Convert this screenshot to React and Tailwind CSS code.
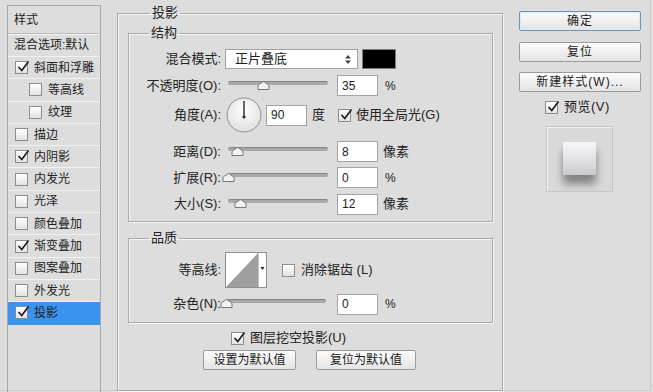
import React from 'react';

const styles = [
  { name: '斜面和浮雕', on: true },
  { name: '等高线', sub: true },
  { name: '纹理', sub: true },
  { name: '描边' },
  { name: '内阴影', on: true },
  { name: '内发光' },
  { name: '光泽' },
  { name: '颜色叠加' },
  { name: '渐变叠加', on: true },
  { name: '图案叠加' },
  { name: '外发光' },
  { name: '投影', on: true, active: true },
];

function Check({ checked }) {
  return (
    <span className="relative flex h-[13px] w-[13px] shrink-0 items-center justify-center border border-[#8d8d8d] bg-gradient-to-b from-white to-[#e3e3e3]">
      {checked && (
        <svg className="absolute left-[1px] top-[-2px]" width="13" height="13" viewBox="0 0 13 13">
          <path d="M1.5 7 L4.8 10.5 L11.5 1.5" fill="none" stroke="#1c1c1c" strokeWidth="1.7" />
        </svg>
      )}
    </span>
  );
}

function Slider({ pos }) {
  return (
    <div className="relative h-[16px] w-[100px]">
      <div className="absolute left-0 right-0 top-[3px] h-[4px] rounded-[2px] border-t border-[#858585] bg-[#a9a9a9]" />
      {/* thumb */}
      <svg className="absolute top-[3px]" style={{ left: pos - 6 }} width="13" height="9" viewBox="0 0 13 9">
        <path d="M1 8.5 V5 Q1 4 2 3.4 L5.6 1 Q6.5 0.5 7.4 1 L11 3.4 Q12 4 12 5 V8.5 Z" fill="#f3f3f3" stroke="#777" />
      </svg>
    </div>
  );
}

function Field({ value }) {
  return (
    <div className="flex h-[21px] w-[41px] items-center border border-[#a3a3a3] bg-white pl-[4px] text-[12px] text-[#222]">
      {value}
    </div>
  );
}

function SliderRow({ label, pos, value, unit, className }) {
  return (
    <div className={`flex items-center ${className}`}>
      <span className="w-[92px] text-right">{label}</span>
      <div className="ml-[7px]">
        <Slider pos={pos} />
      </div>
      <div className="ml-[9px]">
        <Field value={value} />
      </div>
      <span className={unit === '%' ? 'ml-[7px] text-[12px]' : 'ml-[5px]'}>{unit}</span>
    </div>
  );
}

function Button({ children, primary, className }) {
  return (
    <div
      className={`flex h-[20px] items-center justify-center rounded-[2px] border bg-gradient-to-b from-[#fcfcfc] to-[#e4e4e4] text-[12px] tracking-[1px] text-[#1a1a1a] ${
        primary ? 'border-[#6f93b8] shadow-[inset_0_0_0_1px_#dfe9f3]' : 'border-[#9b9b9b]'
      } ${className}`}
    >
      {children}
    </div>
  );
}

export default function App() {
  return (
    <div className="h-[392px] w-[653px] overflow-hidden bg-[#dddddd] font-['Liberation_Sans','Noto_Sans_CJK_SC',sans-serif] text-[13px] text-[#222]">
      <div className="flex h-[391px] w-[651px] items-start border-b border-r border-[#c9c9c9] pl-[7px]">
        {/* styles list */}
        <div className="mt-[5px] h-[400px] w-[94px] shrink-0 border border-[#a6a6a6] text-[12px]">
          <div className="flex h-[28px] items-center border-b border-[#b9b9b9] pl-[6px] shadow-[0_1px_0_#f4f4f4]">样式</div>
          <div className="flex h-[23px] items-center border-b border-[#f2f2f2] pl-[6px]">混合选项:默认</div>
          {styles.map((s) => (
            <div
              key={s.name}
              className={`flex h-[22.3px] items-center border-b ${s.active ? 'border-[#3a94ee] bg-[#3a94ee]' : 'border-[#f2f2f2]'} ${
                s.sub ? 'pl-[21px]' : 'pl-[7px]'
              }`}
            >
              <Check checked={s.on} />
              <span className="ml-[6px]">{s.name}</span>
            </div>
          ))}
        </div>

        {/* main settings */}
        <fieldset className="ml-[16px] mt-[6px] h-[385px] w-[386px] shrink-0 border border-[#a9a9a9] pl-[10px] pr-[9px] shadow-[inset_1px_1px_0_#f6f6f6,1px_1px_0_#f6f6f6]">
          <legend className="ml-[22px] px-[2px] text-[13px] leading-[14px]">投影</legend>

          <fieldset className="mt-[6px] border border-[#a9a9a9] pb-[7px] shadow-[inset_1px_1px_0_#f6f6f6,1px_1px_0_#f6f6f6]">
            <legend className="ml-[20px] px-[2px] leading-[14px]">结构</legend>

            <div className="mt-[9px] flex h-[20px] items-center">
              <span className="w-[92px] text-right">混合模式:</span>
              <div className="ml-[4px] flex h-[20px] w-[133px] items-center justify-between border border-[#a3a3a3] bg-white pl-[9px] pr-[6px]">
                <span>正片叠底</span>
                <svg width="6" height="9" viewBox="0 0 6 9">
                  <path d="M0 3.5 L3 0 L6 3.5 Z M0 5.5 L3 9 L6 5.5 Z" fill="#444" />
                </svg>
              </div>
              <div className="ml-[4px] h-[20px] w-[34px] border border-[#7d7d7d] bg-black" />
            </div>

            <SliderRow className="mt-[6px] h-[21px]" label="不透明度(O):" pos={35} value="35" unit="%" />

            <div className="mt-[1px] flex h-[36px] items-center">
              <span className="w-[92px] text-right">角度(A):</span>
              <svg className="ml-[5px]" width="36" height="36" viewBox="0 0 36 36">
                <defs>
                  <radialGradient id="dial" cx="50%" cy="35%" r="65%">
                    <stop offset="0" stopColor="#fdfdfd" />
                    <stop offset="1" stopColor="#e0e0e0" />
                  </radialGradient>
                </defs>
                <circle cx="18" cy="18" r="17" fill="url(#dial)" stroke="#8e8e8e" />
                <line x1="18" y1="20" x2="18" y2="4" stroke="#2a2a2a" strokeWidth="1.4" />
                <circle cx="18" cy="20" r="1.6" fill="#2a2a2a" />
              </svg>
              <div className="ml-[4px]">
                <Field value="90" />
              </div>
              <span className="ml-[5px]">度</span>
              <span className="ml-[13px]">
                <Check checked />
              </span>
              <span className="ml-[5px]">使用全局光(G)</span>
            </div>

            <SliderRow className="mt-[8px] h-[21px]" label="距离(D):" pos={9} value="8" unit="像素" />
            <SliderRow className="mt-[5px] h-[21px]" label="扩展(R):" pos={0} value="0" unit="%" />
            <SliderRow className="mt-[6px] h-[20px]" label="大小(S):" pos={12} value="12" unit="像素" />
          </fieldset>

          <fieldset className="mt-[9px] border border-[#a9a9a9] pb-[8px] shadow-[inset_1px_1px_0_#f6f6f6,1px_1px_0_#f6f6f6]">
            <legend className="ml-[20px] px-[2px] leading-[14px]">品质</legend>

            <div className="mt-[7px] flex h-[36px] items-center">
              <span className="w-[92px] text-right">等高线:</span>
              <svg className="ml-[4px]" width="42" height="36" viewBox="0 0 42 36">
                <rect x="0.5" y="0.5" width="41" height="35" fill="#fff" stroke="#8f8f8f" />
                <path d="M1 35 L33 1 L33 35 Z" fill="#9f9f9f" />
                <line x1="33.5" y1="1" x2="33.5" y2="35" stroke="#c4c4c4" />
                <path d="M35.5 15 L39.5 15 L37.5 18 Z" fill="#222" />
              </svg>
              <span className="ml-[15px]">
                <Check />
              </span>
              <span className="ml-[6px]">消除锯齿 (L)</span>
            </div>

            <div className="mt-[6px] flex h-[20px] items-center">
              <span className="w-[92px] text-right">杂色(N):</span>
              <div className="ml-[5px]">
                <Slider pos={0} />
              </div>
              <div className="ml-[11px]">
                <Field value="0" />
              </div>
              <span className="ml-[7px] text-[12px]">%</span>
            </div>
          </fieldset>

          <div className="ml-[103px] mt-[8px] flex h-[14px] items-center">
            <Check checked />
            <span className="ml-[6px]">图层挖空投影(U)</span>
          </div>

          <div className="ml-[75px] mt-[5px] flex gap-[20px]">
            <Button className="w-[93px] tracking-normal">设置为默认值</Button>
            <Button className="w-[100px] tracking-normal">复位为默认值</Button>
          </div>
        </fieldset>

        {/* right column */}
        <div className="ml-[16px] flex w-[122px] shrink-0 flex-col pt-[11px]">
          <Button primary>确定</Button>
          <Button className="mt-[11px]">复位</Button>
          <Button className="mt-[10px]">新建样式(W)...</Button>
          <div className="ml-[26px] mt-[8px] flex h-[14px] items-center">
            <Check checked />
            <span className="ml-[6px] tracking-[0.5px]">预览(V)</span>
          </div>
          <div className="ml-[27px] mt-[12px] flex h-[66px] w-[67px] items-center justify-center border border-[#c6c6c6] bg-[#d9d9d9] shadow-[inset_1px_1px_0_#f4f4f4]">
            <div className="mb-[2px] h-[33px] w-[33px] bg-gradient-to-b from-[#f6f6f8] via-[#e4e4e8] to-[#c9c9ce] shadow-[0_9px_8px_rgba(0,0,0,0.4)]" />
          </div>
        </div>
      </div>
    </div>
  );
}
